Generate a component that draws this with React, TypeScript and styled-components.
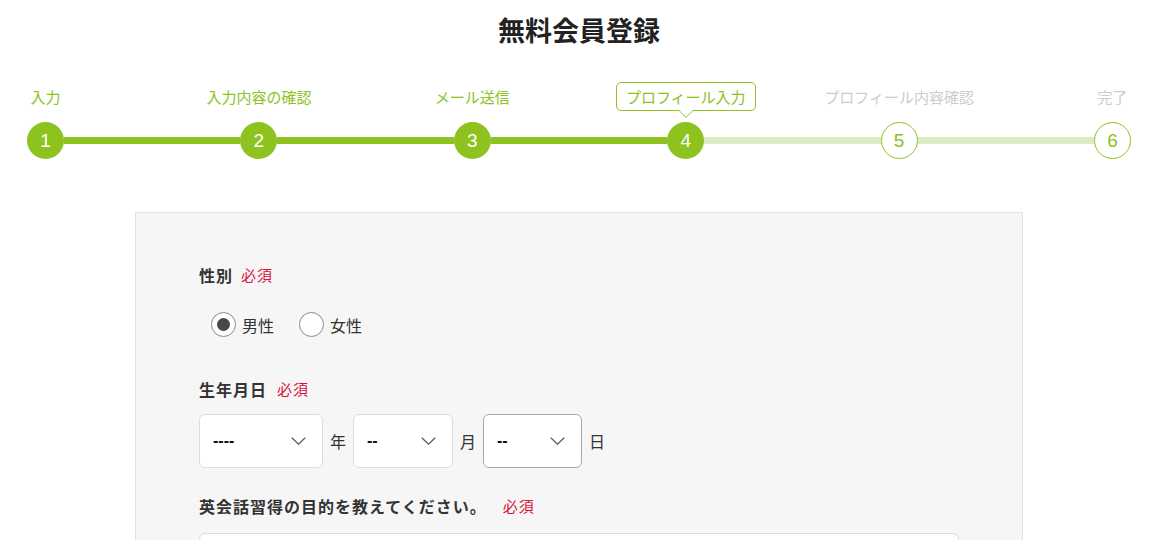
import React from "react";
import styled, { createGlobalStyle, css } from "styled-components";

const GREEN = "#8dc21f";
const GREEN_LIGHT = "#dcebc2";

const Global = createGlobalStyle`
  html, body { margin: 0; padding: 0; background: #fff; }
  body { font-family: "Noto Sans CJK JP", "Noto Sans", sans-serif; color: #333; }
  * { box-sizing: border-box; }
`;

const Page = styled.div`
  padding: 12px 23px 0 27px;
`;

const Title = styled.h1`
  margin: 0;
  text-align: center;
  font-size: 27px;
  line-height: 36px;
  font-weight: 700;
  color: #222;
`;

const Steps = styled.ol`
  list-style: none;
  margin: 34px 0 0;
  padding: 0;
  display: flex;
  align-items: flex-end;
`;

type State = "done" | "current" | "todo";

const Step = styled.li`
  width: 37px;
  flex: none;
  display: flex;
  flex-direction: column;
  align-items: center;
`;

const StepLabel = styled.span<{ $state: State }>`
  position: relative;
  white-space: nowrap;
  height: 29px;
  line-height: 27px;
  padding: 0 9px;
  font-size: 15px;
  border: 1px solid transparent;
  border-radius: 5px;
  margin-bottom: 11px;
  color: ${(p) => (p.$state === "todo" ? "#cccccc" : GREEN)};
  ${(p) =>
    p.$state === "current" &&
    css`
      border-color: ${GREEN};
      background: #fff;
      &::before,
      &::after {
        content: "";
        position: absolute;
        left: 50%;
        transform: translateX(-50%);
        width: 0;
        height: 0;
        border-left: 7px solid transparent;
        border-right: 7px solid transparent;
      }
      &::before {
        top: 28px;
        border-top: 7px solid ${GREEN};
      }
      &::after {
        top: 27px;
        border-top: 7px solid #fff;
      }
    `}
`;

const Circle = styled.span<{ $state: State }>`
  width: 37px;
  height: 37px;
  border-radius: 50%;
  display: flex;
  align-items: center;
  justify-content: center;
  font-family: "Liberation Sans", Arial, sans-serif;
  font-size: 19px;
  ${(p) =>
    p.$state === "todo"
      ? css`
          background: #fff;
          border: 1px solid ${GREEN};
          color: ${GREEN};
        `
      : css`
          background: ${GREEN};
          color: #fff;
        `}
`;

const Connector = styled.span<{ $done: boolean }>`
  flex: 1;
  height: 7px;
  margin-bottom: 15px;
  background: ${(p) => (p.$done ? GREEN : GREEN_LIGHT)};
`;

const Panel = styled.div`
  margin: 53px auto 0;
  width: 888px;
  background: #f6f6f6;
  border: 1px solid #e2e2e2;
  padding: 51px 63px 40px;
`;

const Field = styled.div<{ $gap: number }>`
  margin-bottom: ${(p) => p.$gap}px;
`;

const Label = styled.div<{ $gap: number }>`
  font-size: 16px;
  letter-spacing: 1px;
  line-height: 22px;
  font-weight: 700;
  color: #333;
  margin-bottom: ${(p) => p.$gap}px;
  display: flex;
  align-items: center;
`;

const Required = styled.span<{ $gap?: number }>`
  font-size: 15px;
  letter-spacing: 1px;
  font-weight: 400;
  color: #d8123a;
  margin-left: ${(p) => p.$gap ?? 8}px;
`;

const RadioRow = styled.div`
  display: flex;
  align-items: center;
  gap: 25px;
  padding-left: 12px;
  height: 25px;
`;

const RadioOption = styled.label`
  display: flex;
  align-items: center;
  gap: 6px;
  font-size: 16px;
  color: #333;
`;

const RadioMark = styled.span<{ $checked: boolean }>`
  width: 25px;
  height: 25px;
  border-radius: 50%;
  border: 1px solid #8a8a8a;
  background: #fff;
  display: flex;
  align-items: center;
  justify-content: center;
  &::after {
    content: "";
    width: 13px;
    height: 13px;
    border-radius: 50%;
    background: ${(p) => (p.$checked ? "#474747" : "transparent")};
  }
`;

const DateRow = styled.div`
  display: flex;
  align-items: center;
  gap: 7px;
`;

const Select = styled.div<{ $w: number; $focus?: boolean }>`
  width: ${(p) => p.$w}px;
  height: 54px;
  background: #fff;
  border: 1px solid ${(p) => (p.$focus ? "#a9a9a9" : "#dcdcdc")};
  border-radius: 6px;
  display: flex;
  align-items: center;
  justify-content: space-between;
  padding: 0 16px 0 13px;
  font-family: "Liberation Sans", Arial, sans-serif;
  font-weight: 700;
  font-size: 16px;
  color: #111;
`;

const Unit = styled.span`
  font-size: 16px;
  color: #333;
`;

const TextArea = styled.div`
  height: 60px;
  background: #fff;
  border: 1px solid #dcdcdc;
  border-radius: 6px;
`;

const Chevron = () => (
  <svg width="15" height="8" viewBox="0 0 15 8" fill="none">
    <path d="M0.8 0.8l6.7 6.4 6.7-6.4" stroke="#555" strokeWidth="1.2" />
  </svg>
);

const steps: { label: string; state: State }[] = [
  { label: "入力", state: "done" },
  { label: "入力内容の確認", state: "done" },
  { label: "メール送信", state: "done" },
  { label: "プロフィール入力", state: "current" },
  { label: "プロフィール内容確認", state: "todo" },
  { label: "完了", state: "todo" },
];

export default function App() {
  return (
    <Page>
      <Global />
      <Title>無料会員登録</Title>
      <Steps>
        {steps.map((s, i) => (
          <React.Fragment key={s.label}>
            {i > 0 && <Connector $done={s.state !== "todo"} />}
            <Step>
              <StepLabel $state={s.state}>{s.label}</StepLabel>
              <Circle $state={s.state}>{i + 1}</Circle>
            </Step>
          </React.Fragment>
        ))}
      </Steps>
      <Panel>
        <Field $gap={41}>
          <Label $gap={26}>
            性別<Required>必須</Required>
          </Label>
          <RadioRow>
            <RadioOption>
              <RadioMark $checked />
              男性
            </RadioOption>
            <RadioOption>
              <RadioMark $checked={false} />
              女性
            </RadioOption>
          </RadioRow>
        </Field>
        <Field $gap={27}>
          <Label $gap={14}>
            生年月日<Required $gap={10}>必須</Required>
          </Label>
          <DateRow>
            <Select $w={124}>
              <span>----</span>
              <Chevron />
            </Select>
            <Unit>年</Unit>
            <Select $w={100}>
              <span>--</span>
              <Chevron />
            </Select>
            <Unit>月</Unit>
            <Select $w={99} $focus>
              <span>--</span>
              <Chevron />
            </Select>
            <Unit>日</Unit>
          </DateRow>
        </Field>
        <Field $gap={0}>
          <Label $gap={16}>
            英会話習得の目的を教えてください。<Required $gap={16}>必須</Required>
          </Label>
          <TextArea />
        </Field>
      </Panel>
    </Page>
  );
}
